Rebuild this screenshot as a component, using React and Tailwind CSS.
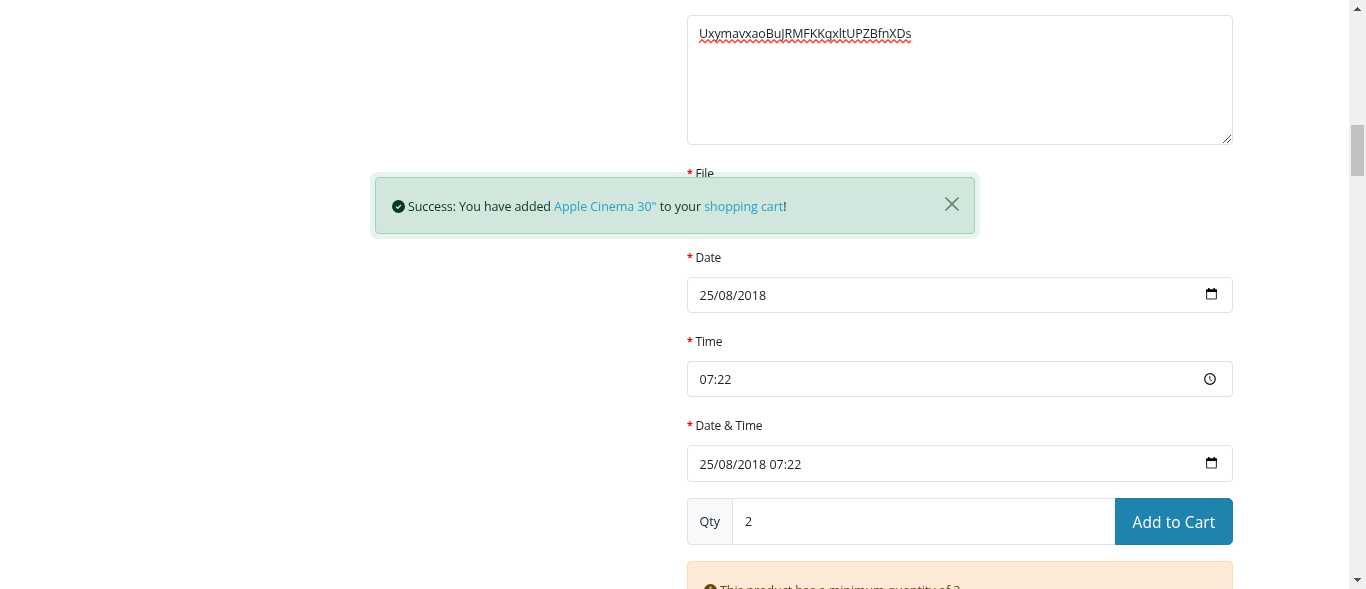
import React from "react";

function Label({ children }) {
  return (
    <div className="flex h-[18px] items-center text-[12px] leading-[18px]">
      <span className="mr-[3px] w-[5px] pb-[2px] text-[10.5px] font-bold text-[#f00]">*</span>
      <span className="ml-[0.5px] tracking-[-0.18px]">{children}</span>
    </div>
  );
}

function CalendarIcon() {
  return (
    <svg className="mr-[15px] -mt-[2px] h-[12px] w-[11px]" viewBox="0 0 11 12" fill="none">
      <path d="M2 0h1.5v1.2h4V0H9v1.2h1.2q.8 0 .8.8V4H0V2q0-.8.8-.8H2z" fill="#000" />
      <path d="M.6 4v6.3q0 .7.7.7h8.4q.7 0 .7-.7V4" stroke="#333" strokeWidth="1.1" />
    </svg>
  );
}

function ClockIcon() {
  return (
    <svg className="mr-[16px] -mt-px h-[12px] w-[12px]" viewBox="0 0 12 12" fill="none" stroke="#111">
      <circle cx="6" cy="6" r="5.3" strokeWidth="1.2" />
      <path d="M5.8 2.9v3.4l2.5 1.8" strokeWidth="0.9" />
    </svg>
  );
}

function Field({ value, icon, tall }) {
  return (
    <div
      className={`flex w-full items-center justify-between rounded-[4px] border border-[#dee2e6] pl-[11px] text-[12.5px] ${
        tall ? "h-[37px]" : "h-[36px]"
      }`}
    >
      <span className={`ml-[0.5px] tracking-[0.03px] ${tall ? "pt-[3px]" : "pt-[2px]"}`}>{value}</span>
      {icon}
    </div>
  );
}

function Squiggle() {
  return (
    <svg className="absolute left-0 top-[15px] h-[5px] w-[212px]" viewBox="0 0 212 5">
      <defs>
        <pattern id="wave" width="6" height="5" patternUnits="userSpaceOnUse">
          <path d="M-3 .8L0 3.8L3 .8L6 3.8L9 .8" fill="none" stroke="#ff3c3c" strokeWidth="1.4" />
        </pattern>
      </defs>
      <rect width="212" height="5" fill="url(#wave)" />
    </svg>
  );
}

function Toast() {
  return (
    <>
      <div className="absolute left-[370px] top-[172px] h-[67px] w-[610px] rounded-[8px] bg-[#e8f3ee] mix-blend-multiply" />
      <div className="absolute left-[375px] top-[177px] flex h-[57px] w-[600px] items-center rounded-[4px] border border-[#a3cfbb] bg-[#d1e7dd] pl-[15.5px] text-[12.5px] text-[#0a3622]">
        <svg className="mr-[3.5px] mt-px h-[13px] w-[13px] shrink-0" viewBox="0 0 13 13">
          <circle cx="6.5" cy="6.5" r="6.5" fill="#0a3622" />
          <path d="M4.2 6.7l1.6 1.6L8.9 5.1" fill="none" stroke="#d1e7dd" strokeWidth="1.4" />
        </svg>
        <span className="whitespace-pre pt-[3px] tracking-[-0.06px]">
          <span className="tracking-[-0.11px]">Success: You have added </span>
          <span className="text-[#2aa0cb]">Apple Cinema 30"</span> to your{" "}
          <span className="text-[#2aa0cb]">shopping cart</span>!
        </span>
        <svg className="-mt-[3px] ml-auto mr-[15.5px] h-[14px] w-[14px]" viewBox="0 0 14 14">
          <path d="M1 1l12 12M13 1L1 13" stroke="#697a71" strokeWidth="1.7" strokeLinecap="round" />
        </svg>
      </div>
    </>
  );
}

function Scrollbar() {
  return (
    <div className="flex h-full w-[17px] flex-col items-center bg-[#f0f0f0]">
      <svg className="h-[17px] w-[17px]" viewBox="0 0 17 17">
        <path d="M8 7h1v1h1v1h1v1h1v1H5v-1h1V9h1V8h1z" fill="#505050" />
      </svg>
      <div className="mt-[108px] h-[51px] w-[13px] bg-[#c1c1c1]" />
      <svg className="mt-auto h-[17px] w-[17px]" viewBox="0 0 17 17">
        <path d="M5 6h7v1h-1v1h-1v1H9v1H8V9H7V8H6V7H5z" fill="#505050" />
      </svg>
    </div>
  );
}

export default function App() {
  return (
    <div className="relative flex h-[589px] w-[1366px] overflow-hidden bg-white font-['Open_Sans',sans-serif] text-[#212529]">
      <main className="flex flex-1 justify-end pr-[116px] pt-[15px]">
        <section className="flex w-[546px] flex-col">
          <div className="flex h-[130px] shrink-0 items-start rounded-[4px] border border-[#dee2e6] pl-[11px] pt-[8px] text-[12.5px] leading-[20px]">
            <span className="relative tracking-[-0.1px]">
              UxymavxaoBuJRMFKKqxltUPZBfnXDs
              <Squiggle />
            </span>
            <svg className="ml-auto mr-px mt-auto mb-px h-[8px] w-[8px]" viewBox="0 0 8 8">
              <path d="M0 8L8 0M4 8L8 4" stroke="#444" strokeWidth="1" />
            </svg>
          </div>
          <div className="mt-[20px]">
            <Label>File</Label>
          </div>
          <div className="mt-[66px]">
            <Label>Date</Label>
          </div>
          <div className="mt-[10px]">
            <Field value="25/08/2018" icon={<CalendarIcon />} />
          </div>
          <div className="mt-[20px]">
            <Label>Time</Label>
          </div>
          <div className="mt-[10px]">
            <Field value="07:22" icon={<ClockIcon />} />
          </div>
          <div className="mt-[20px]">
            <Label>Date &amp; Time</Label>
          </div>
          <div className="mt-[10px]">
            <Field value="25/08/2018 07:22" icon={<CalendarIcon />} tall />
          </div>
          <div className="mt-[16px] flex h-[47px] shrink-0">
            <div className="flex w-[46px] items-center rounded-l-[4px] border border-[#dee2e6] bg-[#f8f9fa] pl-[11.5px] pt-[2px] text-[12.5px]">
              Qty
            </div>
            <div className="flex flex-1 items-center border-y border-[#dee2e6] pl-[12px] pt-[2px] text-[12.5px]">2</div>
            <button className="w-[118px] rounded-r-[5px] border border-[#1f7ea7] bg-[#1e83ad] pt-[2px] text-[15.5px] tracking-[0.08px] text-white">
              Add to Cart
            </button>
          </div>
          <div className="mt-[16px] flex h-[58px] shrink-0 items-center rounded-[4px] border border-[#fbdcaf] bg-[#fdebd7] pl-[16px] text-[12.5px] text-[#664414]">
            <svg className="mr-[3px] h-[13px] w-[13px]" viewBox="0 0 13 13">
              <circle cx="6.5" cy="6.5" r="6.5" fill="#66430f" />
              <path d="M5.6 2.8h1.8v1.8H5.6zM5 5.8h2.3v3.2H8v1H5V9h.8V6.9H5z" fill="#fdebd7" />
            </svg>
            <span className="pt-[2px] tracking-[-0.075px]">This product has a minimum quantity of 2</span>
          </div>
        </section>
      </main>
      <Scrollbar />
      <Toast />
    </div>
  );
}
